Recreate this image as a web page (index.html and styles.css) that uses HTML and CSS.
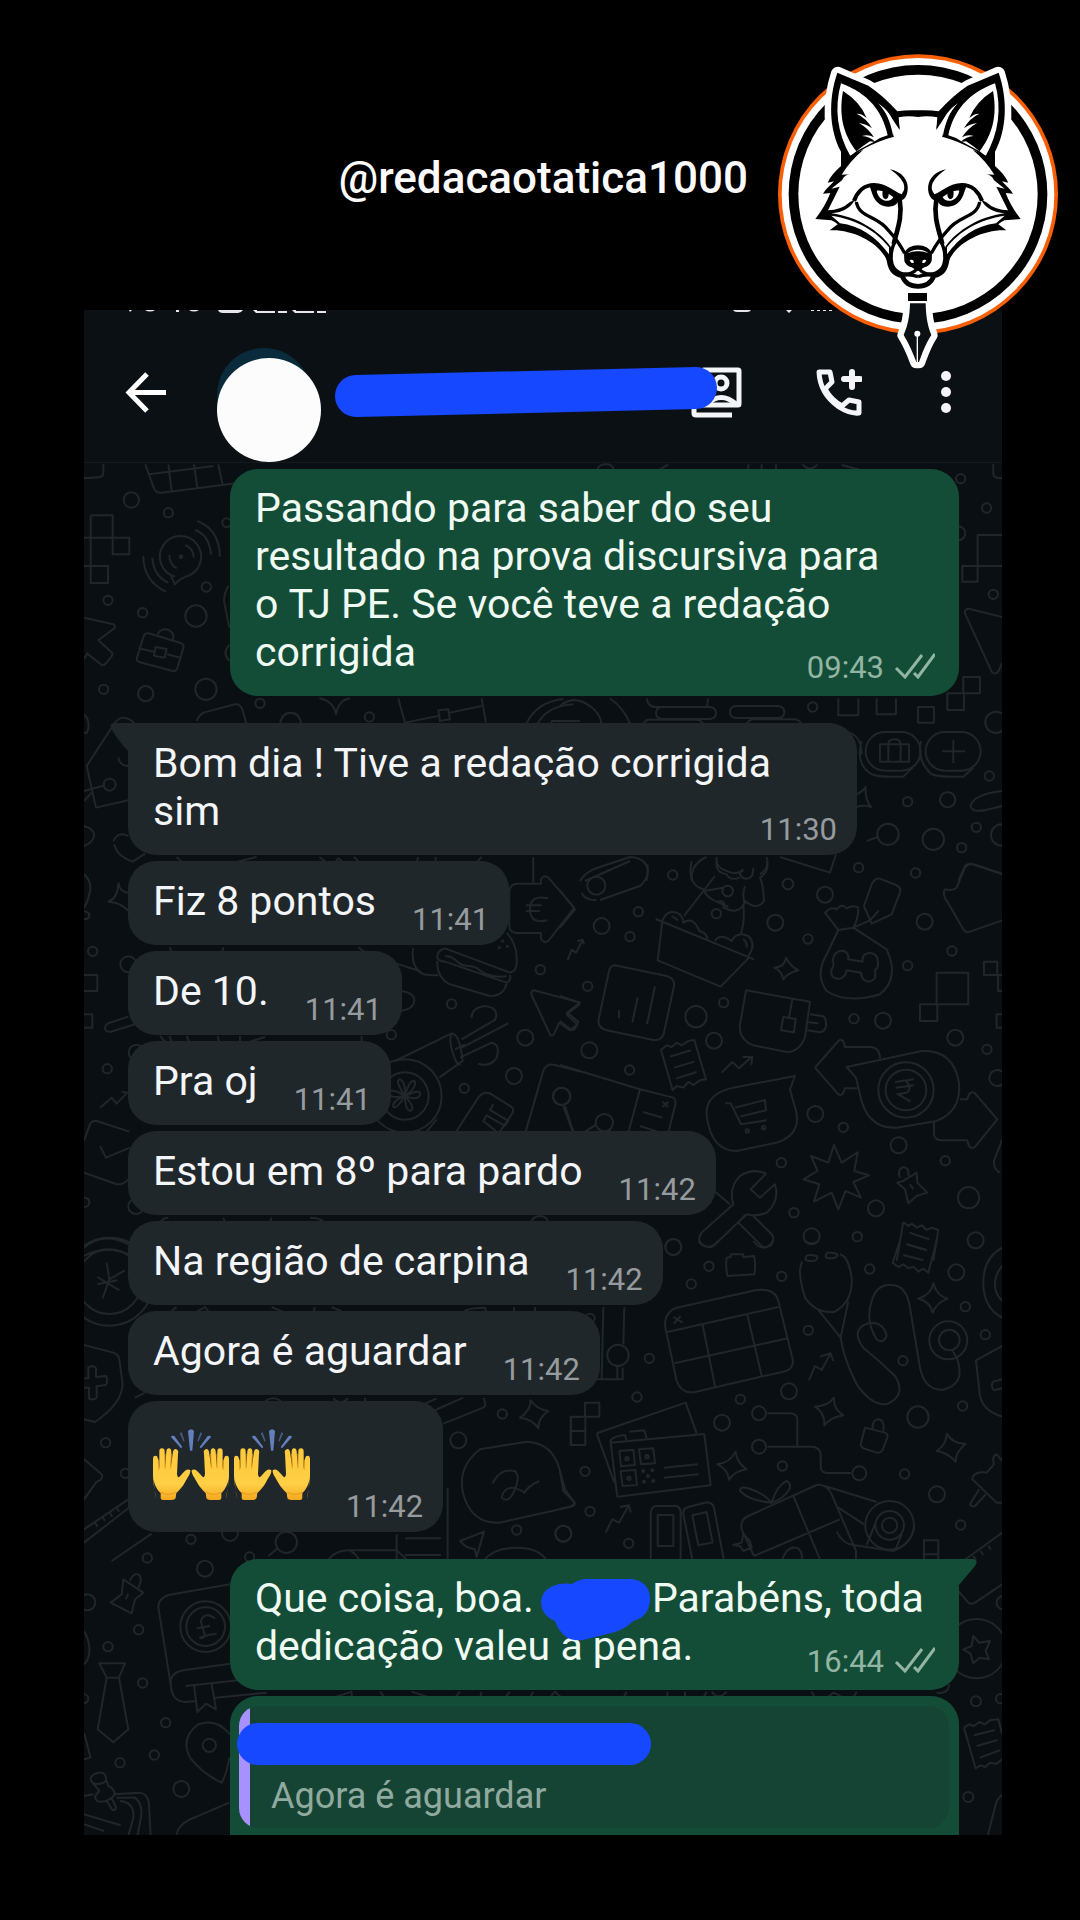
FILE: index.html
```
<!DOCTYPE html>

<html lang="pt-BR">
    <head>
        <meta charset="utf-8">
        <meta name="viewport" content="width=device-width, initial-scale=1">
        <title>@redacaotatica1000</title>
        <link rel="stylesheet" href="styles.css">
    </head>
    <body>

        <svg width="0" height="0" class="defs" aria-hidden="true">
            <defs>
                <symbol id="checks" viewBox="0 0 41 26">
                    <path d="M2 15L11 24L28 2M20 20L24 24L41 1" fill="none" stroke="currentColor" stroke-width="3"/>
                </symbol>
                <linearGradient id="skin" x1="0" y1="0" x2="0" y2="1">
                    <stop offset="0" stop-color="#ffc93c"/>
                    <stop offset="0.7" stop-color="#ffcf45"/>
                    <stop offset="1" stop-color="#f5a71f"/>
                </linearGradient>
                <g id="hand">
                    <path d="M8 210C8 190 0 165 0 140V90Q0 80 7 80T15 90L19 120V68Q19 58 27 58T35 68L37 116L40 66Q41 57 48 58T55 68L53 118L60 68Q62 58 70 61T75 74L72 135C75 150 78 145 87 135C96 124 104 118 112 124C113 135 103 146 96 160C88 176 78 184 70 192L68 206Q67 212 56 213H33Q23 213 23 206V192C12 182 2 165 0 140" fill="url(#skin)"/>
                    <path d="M17 92V122M36 74V118M55 74L53 118M24 190Q45 202 68 190" fill="none" stroke="#e79a1c" stroke-width="3"/>
                </g>
                <symbol id="praise" viewBox="0 0 228 213">
                    <use href="#hand"/>
                    <use href="#hand" transform="translate(228 0) scale(-1 1)"/>
                    <path d="M105 6Q115-4 123 6L118 65H111Z M54 24Q55 18 64 21L88 54L84 58Z M174 24Q173 18 164 21L140 54L144 58Z" fill="#6380bd"/>
                    <path d="M80 13L86 10L95 36L92 38Z M148 13L142 10L133 36L136 38Z" fill="#455985"/>
                </symbol>
            </defs>
        </svg>

        <header class="brand">
            <span class="handle">@redacaotatica1000</span>
            <svg class="logo" viewBox="0 0 960 1020" role="img" aria-label="Redação Tática">
                <circle cx="474" cy="463" r="420" fill="#f95f06"/>
                <circle cx="474" cy="463" r="409" fill="#fff"/>
                <circle cx="474" cy="463" r="388"/>
                <circle cx="474" cy="463" r="359" fill="#fff"/>
                <g id="half">
                    <path d="M233 100C204 190 208 280 243 335L245 372L400 292L418 265L412 214Q370 165 320 138Z" fill="#fff" stroke="#fff" stroke-width="40" stroke-linejoin="round"/>
                    <!-- ear -->
                    <path d="M232 98C204 180 208 270 243 335L243 378C280 340 340 305 402 290C400 262 382 215 355 190C385 215 402 245 419 270L416 232Q445 226 474 231V211Q440 209 412 214Q370 167 325 137Z"/>
                    <path d="M243 130C325 160 368 215 383 286Q360 292 342 305L289 334L271 348C232 280 222 205 243 130Z" fill="#fff"/>
                    <path d="M249 153C235 230 252 285 289 334Q308 318 330 304L346 306Q330 290 306 288Q325 282 342 292Q325 265 297 249Q318 252 336 265Q320 235 290 221Q305 220 320 234Q300 185 249 153Z"/>
                    <path d="M355 190C382 210 398 230 405 262L400 290C390 240 378 215 355 190Z" fill="#fff"/>
                    <path d="M355 190C384 208 404 235 419 268Q416 230 398 208Z"/>
                    <!-- cheek -->
                    <path d="M243 360L243 378C225 394 211 410 203 428L222 424C210 437 196 448 189 461L211 459C200 488 184 514 166 537L214 541Q225 546 233 553L209 571C280 567 365 610 384 670L398 650L392 620C355 570 290 530 214 520Q266 516 284 480L270 486Q242 511 204 511L239 440L214 446L246 421Q253 404 270 403L245 404Q268 365 310 329L275 345Z"/>
                    <path d="M214 527C290 538 352 575 387 622V643C350 592 300 557 240 550Z" fill="#fff"/>
                    <!-- eye and brow -->
                    <path d="M276 481Q296 430 342 429C382 430 400 454 425 463Q451 430 390 388C440 398 452 440 438 469Q430 484 416 480C410 508 354 510 338 465L330 442Q302 446 288 485Z"/>
                    <path d="M350 452C364 448 386 461 400 471C394 489 356 488 350 452Z" fill="#fff"/>
                    <path d="M368 450Q364 477 378 478Q390 471 384 455Z"/>
                    <path d="M289 486C298 535 352 525 386 572Q414 602 434 640" class="fox-line"/>
                    <path d="M419 478C428 530 412 568 401 612" class="fox-line thick"/>
                    <path d="M408 598C386 640 388 685 419 698C444 708 464 698 474 682" class="fox-line"/>
                    <path d="M386 650C388 690 405 704 426 707Q438 739 474 739" class="fox-line thick"/>
                    <path d="M428 706Q452 702 474 710" class="fox-line"/>
                    <!-- nose -->
                    <path d="M474 616Q444 617 432 638L433 663Q438 678 455 682L474 694Z"/>
                    <path d="M474 629Q455 628 443 640Q457 633 474 634Z M449 660Q463 656 461 669Q452 671 449 660Z" fill="#fff"/>
                </g>
                <use href="#half" transform="translate(948 0) scale(-1 1)"/>
                <!-- nib -->
                <path d="M450 790H497C498 830 502 855 514 885C496 912 486 942 477 966H469C460 942 448 912 431 885C444 855 449 830 450 790Z" fill="#0b1014" stroke="#fff" stroke-width="38" stroke-linejoin="round"/>
                <path d="M450 790H497C498 830 502 855 514 885C496 912 486 942 477 966H469C460 942 448 912 431 885C444 855 449 830 450 790Z" fill="#0b1014"/>
                <path d="M444 759H501V783H444Z"/>
                <circle cx="472" cy="881" r="9" fill="#fff"/>
                <path d="M472 884V966" stroke="#fff" stroke-width="4"/>
            </svg>
        </header>

        <main class="phone">

            <div class="topbar">
                <svg class="status" viewBox="0 0 918 4" aria-hidden="true">
                    <path d="M45 0h3l-2 2zM61 0h10q-5 3-10 0zM92 0h3v2h-3zM105 0h10q-5 3-10 0zM134 0h25q-2 3-5 3h-15q-4 0-5-3zM169 0h4v1h18v2h-19zM194 1h9v2h-9zM208 0h4v1h18v2h-19zM233 1h9v2h-9zM649 0h18q-1 2-4 2h-10q-3 0-4-2zM702 0h6l-3 3zM727 0h3v1h-3zM733 0h3v1h-3zM739 0h3v1h-3zM745 0h3v1h-3zM866 0h15v2h-15z" fill="#e7e4ea"/>
                </svg>
                <button class="icon-btn back" aria-label="Voltar">
                    <svg width="41" height="41" viewBox="0 0 41 41"><path d="M22 2L4 20.500L22 39M3 20.500H41" fill="none" stroke="#fff" stroke-width="5"/></svg>
                </button>
                <div class="avatar"></div>
                <div class="contact">
                    <svg class="cover" width="382" height="52" viewBox="0 0 382 52" aria-hidden="true">
                        <path d="M21 30L361 22" stroke="#1648ff" stroke-width="42" stroke-linecap="round"/>
                    </svg>
                </div>
                <button class="icon-btn" aria-label="Contato">
                    <svg width="51" height="52" viewBox="0 0 51 52" fill="none" stroke="#f4f5f8" stroke-width="5">
                        <rect x="12" y="4" width="36" height="35" rx="1"/>
                        <circle cx="30" cy="17" r="6"/>
                        <path d="M16 38Q30 25 45 38M3 10V47Q3 49 5 49H41"/>
                    </svg>
                </button>
                <button class="icon-btn call" aria-label="Ligar">
                    <svg width="46" height="47" viewBox="0 0 46 47" fill="none" stroke="#f4f5f8" stroke-width="5" stroke-linejoin="round">
                        <path d="M3 3H14L16 13L9 20Q15 31 26 37L33 31L43 33V44Q34 45 23 38Q4 25 3 3Z"/>
                        <path d="M36 3V18M28 10H44" stroke-width="6" stroke-linecap="round"/>
                    </svg>
                </button>
                <button class="icon-btn menu" aria-label="Mais opções">
                    <svg width="10" height="42" viewBox="0 0 10 42" fill="#f4f5f8"><circle cx="5" cy="5" r="5"/><circle cx="5" cy="21" r="5"/><circle cx="5" cy="37" r="5"/></svg>
                </button>
            </div>

            <div class="chat">

                <svg class="doodles" viewBox="84 462 918 1373" preserveAspectRatio="xMidYMin slice" aria-hidden="true">
                    <g transform="translate(80 460) scale(.3333)">
                        <path d="M70 10V35Q70 48 55 49L12 52M196 10L222 82Q228 97 245 95L480 65M208 40L400 15M265 10L275 90M342 10L352 80M415 10L428 72"/>
                        <path d="M32 163H98V230H148V280H98V230H12M32 163V315H84V366H32V315H12"/>
                        <path d="M285 347A62 62 0 1 1 318 347Q300 352 285 370Q280 355 272 346M190 285Q190 360 258 392M217 290Q220 345 265 365M345 207Q388 222 393 280M352 180Q418 205 420 287M268 282Q268 310 290 322M315 252Q340 260 341 290"/>
                        <circle cx="303" cy="287" r="4"/>
                        <path d="M12 470L100 490Q108 495 103 502L55 538L96 575Q100 582 92 590L75 610Q68 616 60 608L22 578L12 594"/>
                        <path d="M207 517L302 546Q313 550 310 560L292 622Q288 632 278 630L180 604Q167 600 171 590L190 528Q194 515 207 517ZM175 562L222 572M262 580L300 590M227 558L260 564L254 590L222 584ZM233 520Q245 498 268 508Q285 518 278 536"/>
                        <path d="M445 375Q430 400 433 425L448 500M448 552Q425 575 448 600M350 780Q355 765 370 755L465 730Q480 728 487 745L500 790M600 790Q605 755 632 755T664 790M718 712Q760 720 768 760Q775 718 810 712M955 712L975 785L1075 765M1110 755L1205 735M1205 712L1218 785M1075 748L1105 745L1110 775L1080 780Z"/>
                        <path d="M1338 790Q1370 722 1450 714M1372 790Q1400 735 1480 730M1415 790V780H1500"/>
                        <path d="M95 800L20 915L48 1040L145 1018M95 800Q110 770 130 770Q150 770 165 790M12 990L75 973M12 1020L35 995M115 890Q120 915 145 915M100 1140Q115 1110 145 1125M103 1150Q110 1185 158 1202L195 1178M290 1188L308 1205M460 1205L530 1188M718 1188L740 1205M765 1205L775 1192L790 1205M822 1188L840 1205M1010 1205L1015 1188M1067 1188V1205M1190 1205L1205 1188M1360 1188V1270M12 760Q28 775 25 800T12 812M12 1095Q45 1105 42 1125T12 1155"/>
                        <circle cx="154" cy="117" r="23"/><circle cx="265" cy="155" r="14"/><circle cx="379" cy="378" r="14"/><circle cx="348" cy="465" r="32"/><circle cx="84" cy="418" r="14"/><circle cx="188" cy="455" r="14"/><circle cx="71" cy="685" r="14"/><circle cx="197" cy="698" r="23"/><circle cx="378" cy="685" r="32"/><circle cx="540" cy="727" r="14"/><circle cx="868" cy="768" r="14"/><circle cx="440" cy="185" r="13"/><circle cx="89" cy="971" r="18"/>
                    </g>
                    <g transform="translate(560 460) scale(.3333)">
                        <path d="M112 25Q118 10 138 10T160 25M295 28L325 10M565 10V28M605 10V28M648 10V28M728 10Q750 35 772 10M845 12L905 28M1300 10V40Q1302 52 1327 52M1327 222H1253V315H1327M1207 315H1253V362H1207ZM1327 468L1225 443Q1213 445 1215 457L1295 632Q1305 643 1315 632L1327 605M1210 648H1260V697H1210ZM1162 697H1212V747H1162ZM1074 738H1122V785H1074ZM835 712V763H895V712M950 712V760H1008V712"/>
                        <path d="M0 735Q40 700 90 735Q120 755 125 790M150 712Q195 745 210 790M260 712Q265 738 285 738H440Q445 725 443 712M306 738H450Q468 740 468 756T450 774H306Q288 772 288 756T306 738M528 735H655Q673 737 673 753T655 771H528Q510 769 510 753T528 735M250 790Q255 775 275 776H410Q425 778 430 790M560 790Q565 775 585 775H705Q720 777 724 790"/>
                        <rect x="917" y="813" width="165" height="116" rx="58"/><rect x="1097" y="813" width="165" height="116" rx="58"/>
                        <path d="M905 840Q885 910 935 940Q960 950 1030 947L1058 920M1083 840Q1070 900 1115 940Q1140 950 1210 947L1240 920M870 815Q905 830 905 880M960 850H1047V902H960ZM985 902V850Q985 835 1003 835T1022 850V902M1180 837V907M1147 871H1215"/>
                        <path d="M890 1000Q910 990 917 978Q915 1015 933 1038Q910 1030 890 1038M920 1140L953 1128M1327 990Q1240 1000 1232 1035Q1235 1060 1300 1042L1327 1035M60 1260Q70 1240 100 1225L210 1188Q260 1190 263 1230L260 1260M395 1260Q390 1210 440 1188M660 1188L810 1235L828 1180M470 1188Q465 1220 500 1230Q530 1245 550 1225M620 1188Q630 1220 600 1240M1195 1260L1215 1215Q1225 1205 1240 1210L1327 1238"/>
                        <circle cx="1202" cy="53" r="14"/><circle cx="1280" cy="141" r="14"/><circle cx="1195" cy="217" r="21"/><circle cx="1300" cy="400" r="14"/><circle cx="758" cy="738" r="14"/><circle cx="1308" cy="784" r="32"/><circle cx="1288" cy="945" r="14"/><circle cx="1163" cy="1016" r="23"/><circle cx="1043" cy="1022" r="14"/><circle cx="984" cy="1120" r="32"/><circle cx="1120" cy="1135" r="32"/><circle cx="1249" cy="1099" r="14"/><circle cx="1205" cy="1160" r="14"/><circle cx="1325" cy="1122" r="32"/>
                    </g>
                    <g transform="translate(80 860) scale(.3333)">
                        <path d="M12 40Q35 60 30 90T12 140M12 150Q30 155 28 165T12 175M115 65Q120 95 145 95M115 65Q115 110 85 122Q125 125 145 150M12 342H52V390H12M12 460H37V500H12M145 467L85 487Q70 498 78 508Q85 516 100 510L165 490M60 740L95 710L110 728L142 695L125 692M12 840L30 790Q35 778 50 780L148 812M12 935L110 970Q130 972 145 955M60 855L78 890L150 860M12 1160Q70 1110 145 1150M12 1185Q75 1150 145 1180"/>
                        <path d="M1310 68H1383V55Q1390 40 1405 50L1483 140L1405 240Q1390 248 1383 232V216H1310Q1288 214 1288 195V90Q1290 70 1310 68ZM1405 112Q1350 100 1350 145T1402 178M1338 133H1385M1338 150H1380"/>
                        <path d="M1000 260Q990 320 1030 340Q1060 345 1075 342M940 305L1020 330M1095 262L1290 335Q1312 330 1310 300Q1312 250 1280 215M1095 262Q1070 270 1072 290Q1075 300 1095 302L1280 365Q1295 360 1290 342M1072 300Q1070 350 1110 370L1230 405Q1270 405 1280 368M1095 285Q1115 285 1130 300T1165 315T1200 328T1240 345T1280 345"/>
                        <path d="M1500 425L1362 388Q1352 390 1355 402L1410 520Q1417 528 1423 518L1438 485L1470 508L1492 490L1460 460L1500 430"/>
                        <path d="M945 600L1115 517Q1140 520 1148 600L1078 650M1115 517Q1105 540 1120 580Q1130 615 1142 610M1145 535L1245 477Q1260 440 1215 435Q1175 440 1175 470M1145 560L1285 487M1140 590L1235 545Q1262 550 1250 590Q1230 620 1195 608M1125 565L1155 550"/>
                        <circle cx="975" cy="705" r="110"/><circle cx="975" cy="705" r="71"/>
                        <path d="M975 705Q945 660 958 655Q978 660 975 705Q990 650 1005 662Q1010 680 975 705Q1025 680 1020 703Q1010 720 975 705Q1010 745 990 750Q975 745 975 705Q950 745 940 738Q935 720 975 705Q920 715 930 690Q945 685 975 705M1130 810L1195 710Q1210 690 1230 697L1290 735Q1305 743 1297 757L1260 812M1240 730L1230 747L1285 780L1275 795L1220 763L1210 780L1250 812M1337 812L1390 630Q1400 605 1425 612L1500 632M1455 735L1480 812M1040 812L1070 775M240 525L260 548M268 525L278 548M320 525L330 548M413 525L418 548M480 525V548M490 548L555 528M845 525V548M270 258L275 278M430 258L425 278M835 258L860 278M240 1085Q250 1070 265 1070M430 1070L435 1085M570 1085L575 1070M690 1070Q720 1070 735 1085M1352 1085Q1360 1065 1380 1065T1405 1085M960 390Q1005 395 1003 420T960 450"/>
                        <circle cx="38" cy="271" r="14"/><circle cx="145" cy="310" r="24"/><circle cx="82" cy="623" r="14"/><circle cx="1381" cy="326" r="14"/><circle cx="1115" cy="429" r="14"/><circle cx="1336" cy="530" r="24"/><circle cx="1302" cy="645" r="24"/><circle cx="1153" cy="682" r="14"/><circle cx="1445" cy="706" r="26"/><circle cx="934" cy="521" r="14"/><circle cx="14" cy="1024" r="14"/><circle cx="168" cy="1036" r="23"/><circle cx="170" cy="575" r="24"/><circle cx="1268" cy="240" r="2"/><circle cx="1258" cy="260" r="2"/><circle cx="1282" cy="256" r="2"/>
                    </g>
                    <g transform="translate(560 860) scale(.3333)">
                        <path d="M75 60L210 0M120 117L240 75Q270 50 262 10M65 95Q70 115 110 118M395 0Q380 70 430 85Q440 110 470 122Q500 115 490 140Q540 165 555 120Q590 150 612 120Q610 70 600 50Q630 30 620 0M470 0Q465 35 500 40Q510 60 540 50M580 20Q580 60 550 52Q530 35 550 28M465 45L372 165M550 130Q555 180 543 218M555 75Q545 100 555 130M432 90L490 80M470 122L505 138"/>
                        <path d="M287 174L582 295M307 182L293 298L482 377L567 290M307 180Q320 145 350 155Q370 165 370 185Q400 165 418 210Q440 215 443 235M465 240Q480 215 515 240Q530 210 565 225Q590 250 565 285M335 165L355 178M550 235Q562 245 560 260"/>
                        <path d="M165 313L320 345Q345 352 342 375L312 515Q305 540 280 537L140 508Q112 500 116 475L147 330Q152 313 165 313ZM177 447V472M233 410L217 484M285 376L261 490"/>
                        <path d="M23 298L35 266L48 275L68 238M52 240L68 236L72 250M485 635L517 603L537 622L575 588M548 588H577L574 612M0 88L45 145L0 200M0 405L60 425L22 455L55 482Q45 510 35 508L0 480"/>
                        <path d="M558 388L750 422L735 530Q715 575 680 573L580 553Q535 535 540 490ZM697 415L687 470M670 468L707 474L702 514L663 508ZM750 460L790 466Q800 475 798 495Q795 512 780 514L742 508M745 484L775 487"/>
                        <path d="M303 567L320 553L335 558L350 545L365 553L385 540L403 537L438 655L420 658L400 672L385 663L370 680L350 675L338 687ZM330 587L393 568M342 620L403 602M348 653L410 633"/>
                        <path d="M705 645L520 680Q430 700 441 770Q455 870 530 870L650 845Q725 820 708 750L690 685ZM495 727H512L543 790L620 778M525 740L615 717L618 748L540 767"/>
                        <circle cx="562" cy="810" r="5"/><circle cx="611" cy="800" r="5"/>
                        <path d="M678 290Q690 315 715 328Q685 335 670 355Q665 330 643 320Q675 318 678 290Z"/>
                        <path d="M835 207L795 155Q815 135 830 145Q845 125 860 142Q880 130 895 140Q895 175 880 200L980 265Q1020 350 960 400Q860 430 800 390Q770 350 790 300Q820 240 835 207L880 200L930 178M912 135L935 70Q945 50 960 53L1008 72Q1025 80 1020 95L995 160L935 188ZM930 178L957 148"/>
                        <path d="M865 295L908 302C900 270 955 265 953 300C960 330 940 320 945 335C955 365 905 375 903 335L860 328C855 365 805 360 815 325C825 310 820 310 818 300C820 260 870 260 865 295Z"/>
                        <path d="M1327 40L1240 10Q1225 5 1215 20L1190 80Q1180 90 1155 85Q1148 95 1155 110L1210 205Q1217 217 1230 212L1327 178M1130 335H1225V430H1130ZM1080 430H1132V480H1080ZM1272 302H1312V342H1272ZM1327 342H1314V390H1327M1327 460H1310V500H1327"/>
                        <path d="M765 620L835 540Q850 528 855 558H930Q960 560 960 592M765 620L835 700Q848 708 855 682H892M860 618L1085 570Q1180 565 1197 665Q1205 750 1130 780L1010 800Q920 805 900 700L888 650ZM1122 780V820Q1125 838 1145 838H1222Q1228 870 1245 858L1312 775L1245 697Q1230 685 1222 715H1200M1005 663L1062 655M1007 680L1062 673M1010 700L1040 695Q1060 680 1035 658M1015 700L1052 722"/>
                        <circle cx="1038" cy="687" r="83"/><circle cx="1038" cy="687" r="61"/>
                        <path d="M822 852L845 905L893 874L883 930L927 943L880 963L903 1010L857 990L835 1045L815 995L762 1022L778 970L730 955L773 930L753 885L805 905ZM1012 965L1030 960L1070 935L1072 965L1102 995L1070 1005L1045 1027L1035 985ZM1020 950Q1010 925 1030 918Q1050 920 1045 945M1050 970L1060 985"/>
                        <path d="M0 612L240 685L340 710Q350 720 345 735L325 815M240 685L205 815M250 753L307 770M240 795L292 812M308 722L325 738M325 722L308 738M10 735L38 812M75 812L110 790M150 812V805"/>
                        <path d="M520 1030Q505 980 540 945Q580 920 618 938L572 985L600 1010L645 970Q660 1020 620 1055Q590 1068 560 1060L460 1155Q445 1165 425 1150Q410 1135 425 1115ZM555 1062L535 1085L605 1155Q620 1165 635 1150Q645 1130 635 1120L580 1065M445 975L510 1030M445 938H457V975H445M1030 1083L1045 1095L1055 1088L1070 1100L1085 1093L1100 1107L1115 1100L1135 1107L1120 1200M1030 1083L1010 1200M1048 1115L1108 1135M1040 1150L1100 1168M1327 835L1302 900Q1300 925 1320 935"/>
                        <circle cx="109" cy="74" r="27"/><circle cx="338" cy="42" r="14"/><circle cx="235" cy="152" r="14"/><circle cx="125" cy="195" r="24"/><circle cx="210" cy="227" r="14"/><circle cx="83" cy="376" r="14"/><circle cx="408" cy="467" r="32"/><circle cx="491" cy="425" r="14"/><circle cx="462" cy="539" r="24"/><circle cx="88" cy="568" r="24"/><circle cx="209" cy="627" r="14"/><circle cx="133" cy="785" r="26"/><circle cx="5" cy="706" r="26"/><circle cx="503" cy="90" r="16"/><circle cx="469" cy="158" r="14"/><circle cx="684" cy="69" r="16"/><circle cx="795" cy="101" r="24"/><circle cx="646" cy="185" r="24"/><circle cx="744" cy="234" r="14"/><circle cx="896" cy="20" r="14"/><circle cx="1067" cy="36" r="14"/><circle cx="1094" cy="182" r="24"/><circle cx="1176" cy="270" r="14"/><circle cx="1043" cy="314" r="14"/><circle cx="882" cy="473" r="14"/><circle cx="969" cy="479" r="24"/><circle cx="1186" cy="530" r="24"/><circle cx="1281" cy="565" r="14"/><circle cx="1312" cy="651" r="24"/><circle cx="766" cy="759" r="24"/><circle cx="850" cy="799" r="14"/><circle cx="1016" cy="853" r="24"/><circle cx="1156" cy="899" r="14"/><circle cx="664" cy="905" r="14"/><circle cx="948" cy="1042" r="24"/><circle cx="702" cy="1055" r="14"/><circle cx="755" cy="1126" r="24"/><circle cx="892" cy="1127" r="14"/><circle cx="1226" cy="1010" r="32"/><circle cx="1247" cy="1138" r="24"/><circle cx="340" cy="1158" r="24"/>
                    </g>
                    <g transform="translate(80 1240) scale(.3333)">
                        <circle cx="88" cy="122" r="132"/><circle cx="88" cy="122" r="97"/>
                        <path d="M80 65L88 115L68 172M88 115L135 88M52 108L118 148M52 130L112 118M12 312L100 335Q115 340 118 355L128 430Q125 490 45 543L12 535M12 412H25V380Q40 370 48 382V408L78 405Q85 420 78 432L50 436V470Q38 480 27 472V440H12M165 470L195 455M12 655L65 700Q70 710 60 718L50 722L12 775M12 865L145 775M12 905L160 790M95 960L215 878M45 845L53 858M68 828L75 840M90 815L97 828M110 800L117 812"/>
                        <path d="M265 218L290 198M340 218L375 198L390 218M575 198L620 218M698 218L705 198M755 198L800 218M1145 218Q1155 200 1215 200L1220 218M1302 198V218M1365 198V218M550 490Q560 472 580 472T608 490M760 472Q780 495 805 472M855 470V490M1030 490L1070 472M1060 510L1150 470M1090 548L1210 500Q1222 495 1210 470M1103 740V960M950 880V960M975 892H1083M975 942H1083M740 960Q770 925 810 928H950L985 960M810 928Q830 940 840 960"/>
                        <path d="M1352 478Q1370 505 1405 510Q1375 530 1375 562Q1360 535 1320 530Q1352 510 1352 478ZM1500 528H1472V612H1500M1472 570H1500M1200 625L1340 602Q1420 605 1440 690L1450 750L1485 785Q1485 795 1470 798L1260 845Q1175 850 1150 760Q1130 680 1200 625ZM1238 727Q1260 680 1305 690Q1325 710 1295 765Q1280 785 1265 770Q1270 740 1300 740Q1320 745 1333 755Q1345 735 1378 720M1212 872L1140 900L1160 918L1185 925L1190 948ZM1210 960Q1240 920 1310 920T1400 960M565 945L595 920"/>
                        <circle cx="77" cy="605" r="14"/><circle cx="136" cy="697" r="14"/><circle cx="1267" cy="519" r="14"/><circle cx="1135" cy="598" r="24"/><circle cx="1310" cy="867" r="14"/><circle cx="1450" cy="878" r="24"/><circle cx="333" cy="895" r="14"/><circle cx="450" cy="876" r="24"/><circle cx="619" cy="904" r="32"/><circle cx="202" cy="951" r="14"/><circle cx="509" cy="948" r="14"/>
                    </g>
                    <g transform="translate(560 1240) scale(.3333)">
                        <path d="M415 0Q445 35 475 0M580 0Q610 40 640 0M735 0Q755 15 775 0M500 50L512 48V40H550V48L582 45Q588 70 583 100L503 105Q496 80 500 50ZM130 198L125 415M193 198L190 310M95 415H188V380M172 378V415M75 485H118V527H75ZM33 527H76V612H33ZM33 570H76"/>
                        <path d="M350 200L590 147Q645 140 655 180L697 350Q705 385 670 392L405 453Q365 460 350 420L316 260Q310 215 350 200ZM322 273L655 198M343 367L684 292M428 252L466 440M562 222L605 404M340 228L368 245M362 225L342 248"/>
                        <path d="M727 62Q710 90 735 170Q770 220 825 212Q880 180 875 110Q865 45 840 40M738 52Q735 40 755 42T772 50Q770 62 750 60T738 52ZM798 45Q795 32 815 35T832 42Q830 52 812 52T798 45ZM775 207L842 290L865 180M842 290Q850 350 890 430Q940 500 985 488Q1040 460 1005 405Q960 360 910 320Q870 265 925 247Q970 240 980 285Q970 310 950 295Q915 240 935 180Q950 130 990 132Q1040 130 1050 200L1080 380Q1095 450 1150 446Q1220 430 1190 350L1175 325"/>
                        <circle cx="1165" cy="298" r="57"/><circle cx="1168" cy="297" r="31"/>
                        <path d="M1120 127Q1130 165 1163 173Q1130 185 1118 215Q1110 180 1075 173Q1115 160 1120 127ZM822 470Q820 505 850 523Q810 530 793 553Q795 515 765 497Q805 495 822 470ZM527 632Q530 665 560 685Q525 690 507 716Q505 685 472 670Q510 665 527 632ZM1160 578Q1180 610 1217 608Q1185 635 1187 663Q1165 635 1130 630Q1160 610 1160 578ZM747 418L765 375L785 387L810 340M780 347L812 337L820 360M137 875L157 835L177 845L205 795M180 798L207 793L212 815"/>
                        <path d="M1020 0L998 65L1015 78L1030 70L1045 82L1060 77L1075 92L1090 83L1105 95L1130 0M1040 10L1100 27M1030 42L1090 58M1327 20Q1270 50 1270 125T1327 230M1327 75Q1305 100 1305 130T1327 180M1327 315L1248 358L1260 465Q1270 510 1327 527M1327 415L1300 422Q1290 435 1302 448L1327 442"/>
                        <path d="M110 577L377 485L410 577M110 577L163 725M152 605L433 579L452 733L172 767ZM178 630L220 626L225 672L183 676ZM237 625L280 622L285 667L243 670ZM182 690L226 687L231 732L188 735ZM150 603Q155 585 195 582L200 600M208 572L253 568L260 592M312 680L413 670M312 710L415 700"/>
                        <circle cx="201" cy="653" r="5"/><circle cx="261" cy="647" r="5"/><circle cx="207" cy="712" r="5"/><circle cx="250" cy="690" r="3"/><circle cx="277" cy="688" r="3"/><circle cx="264" cy="705" r="3"/><circle cx="252" cy="722" r="3"/><circle cx="280" cy="720" r="3"/>
                        <path d="M622 517H690Q712 518 712 535V615M622 617H755Q780 618 782 640V675Q783 695 800 696H873M915 560L975 575Q985 580 982 590L968 627Q960 638 950 635L910 622Q900 615 903 607ZM938 565Q935 535 958 535Q975 540 970 570"/>
                        <path d="M272 960V815Q275 795 290 795H350Q362 800 362 815V960M293 822H340V915H293ZM398 960L370 820Q368 803 385 798L440 784Q458 785 462 800L492 960M397 823L440 813L458 905L415 913Z"/>
                        <path d="M582 945L545 865Q540 835 565 825L770 732Q800 728 815 760L888 930V960M582 945L840 835M700 765L782 960M635 785Q570 780 540 750Q540 735 565 742Q610 755 635 785Q650 735 680 720Q695 728 688 745Q670 775 635 785M665 960Q680 915 710 920Q730 930 725 960M520 912L545 905L550 880L570 900L575 920L550 930L540 915ZM795 735L950 783M835 800L912 850M830 872Q850 910 880 912L1000 930M920 912L945 850M1025 880L1005 930M1000 930Q1055 910 1063 855"/>
                        <circle cx="989" cy="853" r="73"/><circle cx="989" cy="853" r="43"/><circle cx="989" cy="853" r="23"/>
                        <path d="M1327 660L1310 640Q1295 645 1302 670L1280 695Q1240 690 1237 715L1310 785L1327 785M1258 745L1230 790Q1235 800 1245 795L1278 760M1092 960V898H1135V960M1092 940H1135M1210 960L1327 875M1240 945L1248 957M1262 930L1270 942M1285 915L1293 925M0 690L15 745L43 785Q40 798 0 803"/>
                        <circle cx="340" cy="18" r="24"/><circle cx="447" cy="76" r="14"/><circle cx="394" cy="129" r="14"/><circle cx="665" cy="106" r="14"/><circle cx="929" cy="84" r="14"/><circle cx="1189" cy="94" r="24"/><circle cx="1216" cy="197" r="14"/><circle cx="1276" cy="281" r="14"/><circle cx="90" cy="232" r="14"/><circle cx="174" cy="343" r="32"/><circle cx="268" cy="352" r="14"/><circle cx="231" cy="468" r="14"/><circle cx="745" cy="268" r="14"/><circle cx="1029" cy="359" r="14"/><circle cx="687" cy="451" r="24"/><circle cx="541" cy="475" r="14"/><circle cx="486" cy="545" r="24"/><circle cx="597" cy="517" r="21"/><circle cx="597" cy="617" r="21"/><circle cx="898" cy="697" r="21"/><circle cx="1208" cy="495" r="14"/><circle cx="1074" cy="528" r="32"/><circle cx="667" cy="675" r="14"/><circle cx="1034" cy="699" r="14"/><circle cx="1131" cy="760" r="24"/><circle cx="1202" cy="852" r="14"/><circle cx="75" cy="691" r="14"/><circle cx="90" cy="811" r="14"/><circle cx="206" cy="907" r="14"/><circle cx="10" cy="878" r="24"/>
                    </g>
                    <g transform="translate(80 1540) scale(.3333)">
                        <path d="M130 115L190 155L165 175L155 217L92 185L125 160ZM150 120Q160 95 175 100Q190 110 175 140M145 158L137 175"/>
                        <path d="M450 130L265 162Q230 175 236 205L272 430Q275 485 320 483L345 480M405 470L560 455M272 430Q270 395 310 388L450 368M317 435L475 418M342 432L352 513L378 488L408 505L395 428M405 232Q375 210 362 240L375 285Q365 295 360 290Q385 280 410 278M350 262L390 255"/>
                        <circle cx="377" cy="257" r="76"/><circle cx="377" cy="257" r="58"/>
                        <path d="M58 367H135L117 410H80ZM80 410L53 565L100 604L145 565L117 410M12 270Q30 300 28 330T12 370M12 575L32 650L12 655M450 580Q410 530 355 550Q300 590 330 650Q370 700 425 725Q440 700 448 650M448 785L330 835Q290 855 290 885M760 470L815 452V470M900 452L915 470M995 452L1050 470M1125 470L1140 452M1200 470L1205 452M1275 470L1290 452M1350 470L1360 452M1410 470L1425 452L1445 470"/>
                        <path d="M35 722Q25 705 50 697T78 710Q82 725 60 728T35 722M40 728L58 750Q35 770 55 782Q85 785 105 760Q100 740 85 735L78 715M80 780L98 808Q108 808 108 798L95 772M12 765L40 760M100 760L180 755Q205 760 207 790L212 885M110 770L165 770Q190 790 183 830L172 885M120 780Q165 785 160 830L145 885M12 820L122 853M12 850L72 870"/>
                        <circle cx="375" cy="83" r="24"/><circle cx="176" cy="266" r="14"/><circle cx="84" cy="317" r="14"/><circle cx="188" cy="426" r="14"/><circle cx="257" cy="545" r="14"/><circle cx="388" cy="613" r="20"/><circle cx="223" cy="642" r="14"/><circle cx="120" cy="665" r="14"/><circle cx="304" cy="744" r="24"/><circle cx="22" cy="184" r="24"/><circle cx="12" cy="473" r="13"/>
                    </g>
                    <g transform="translate(560 1540) scale(.3333)">
                        <circle cx="1250" cy="323" r="89"/>
                        <path d="M1240 285L1257 305L1290 300L1277 330L1287 355L1260 350L1240 367L1232 338L1210 325L1235 315ZM1195 150L1225 185Q1235 192 1245 185L1327 130M1212 560L1228 550L1242 555L1258 543L1275 550L1290 538L1315 535L1327 580M1212 560L1247 682L1262 673L1275 678L1290 665L1310 668L1327 655M1242 583L1305 567M1250 615L1313 597M1260 650L1320 628M1283 885L1310 780L1327 760M190 470L200 452M322 452V470M375 452V470M430 470L440 452M455 452Q475 480 500 452M755 452L765 470M800 470L822 455L850 470M880 470L890 452M1130 455Q1165 460 1168 430"/>
                        <circle cx="1248" cy="481" r="15"/><circle cx="1322" cy="473" r="14"/><circle cx="1225" cy="768" r="15"/><circle cx="1330" cy="185" r="20"/>
                    </g>
                </svg>

                <div class="bubble sent wide">
                    <p>Passando para saber do seu resultado na prova discursiva para o&nbsp;TJ PE. Se você teve a redação corrigida</p>
                    <span class="time">09:43 <svg class="checks"><use href="#checks"/></svg></span>
                </div>

                <div class="bubble received wide first">
                    <svg class="tail" viewBox="0 0 46 30" aria-hidden="true"><path d="M46 0H4Q-2 1 2 7Q10 20 18 28L46 30Z" fill="#20272a"/></svg>
                    <p>Bom dia ! Tive a redação corrigida sim</p>
                    <span class="time">11:30</span>
                </div>
                <div class="bubble received"><p>Fiz 8 pontos</p><span class="time">11:41</span></div>
                <div class="bubble received"><p>De 10.</p><span class="time">11:41</span></div>
                <div class="bubble received"><p>Pra oj</p><span class="time">11:41</span></div>
                <div class="bubble received"><p>Estou em 8º para pardo</p><span class="time">11:42</span></div>
                <div class="bubble received"><p>Na região de carpina</p><span class="time">11:42</span></div>
                <div class="bubble received"><p>Agora é aguardar</p><span class="time">11:42</span></div>
                <div class="bubble received emoji">
                    <div class="hands">
                        <svg role="img" aria-label="mãos levantadas"><use href="#praise"/></svg>
                        <svg role="img" aria-label="mãos levantadas"><use href="#praise"/></svg>
                    </div>
                    <span class="time">11:42</span>
                </div>

                <div class="bubble sent wide first">
                    <svg class="tail" viewBox="0 0 46 30" aria-hidden="true"><path d="M0 0H42Q48 1 44 7L28 26L0 30Z" fill="#144d37"/></svg>
                    <p>Que coisa, boa. <span class="hidden-name"><svg class="scribble" width="110" height="62" viewBox="0 0 110 62" aria-hidden="true"><path d="M18 5Q26 4 31 5Q38 0 46 0H90Q109 2 109 21Q108 38 92 42Q86 49 74 53L42 61Q22 64 14 42Q0 36 0 23Q1 9 18 5Z" fill="#1648ff"/></svg></span>Parabéns, toda dedicação valeu a pena.</p>
                    <span class="time">16:44 <svg class="checks"><use href="#checks"/></svg></span>
                </div>

                <div class="bubble sent reply">
                    <blockquote class="quote">
                        <div class="quote-name"></div>
                        <p>Agora é aguardar</p>
                    </blockquote>
                </div>

            </div>
        </main>

    </body>
</html>
```

FILE: styles.css
```
*{
    box-sizing: border-box;
}

body{
    margin: 0;
    padding-bottom: 85px;
    background: #000;
    font-family: Roboto, "Liberation Sans", sans-serif;
}

p{
    margin: 0;
}

.defs{
    position: absolute;
}

/* top of the page */
.brand{
    display: flex;
    justify-content: flex-end;
    align-items: flex-start;
    gap: 12px;
    padding-top: 40px;
}

.handle{
    margin-top: 111px;
    color: #fcfafa;
    font-size: 44px;
    font-weight: 500;
    line-height: 54px;
}

.logo{
    position: relative;
    z-index: 2;
    width: 320px;
    height: 340px;
    margin-bottom: -70px;
}

.fox-line{
    fill: none;
    stroke: #000;
    stroke-width: 10px;
}

.thick{
    stroke-width: 14px;
}

/* phone */
.phone{
    margin: 0 78px 0 84px;
    background: #0a0f13;
    overflow: hidden;
}

.topbar{
    position: relative;
    display: flex;
    align-items: center;
    height: 152px;
    padding: 12px 51px 0 41px;
    background: #0b1014;
}

.status{
    position: absolute;
    top: 0;
    left: 0;
    width: 100%;
}

.icon-btn{
    display: block;
    padding: 0;
    border: 0;
    background: none;
}

.icon-btn svg{
    display: block;
}

.avatar{
    position: relative;
    width: 94px;
    height: 94px;
    margin-top: 6px;
    margin-left: 51px;
    border-radius: 50%;
    background: #0a2b3b;
}

.avatar::after{
    content: "";
    position: absolute;
    top: 10px;
    left: 0;
    width: 104px;
    height: 104px;
    border-radius: 50%;
    background: #fcfcfc;
}

.contact{
    position: relative;
    flex: 1;
    height: 52px;
}

.cover{
    position: absolute;
    top: 0;
    left: 24px;
    z-index: 1;
}

.call{
    margin-left: 74px;
}

.menu{
    margin-left: 79px;
}

/* messages */
.chat{
    position: relative;
    display: flex;
    flex-direction: column;
    align-items: flex-start;
    gap: 6px;
    padding: 6px 43px 0 44px;
    border-top: 1px solid #14191d;
}

.doodles{
    position: absolute;
    top: 0;
    left: 0;
    width: 100%;
    height: 100%;
    fill: none;
    stroke: #21262a;
    stroke-width: 6px;
    stroke-linejoin: round;
}

.bubble{
    position: relative;
    display: grid;
    grid-template-columns: auto auto;
    column-gap: 36px;
    padding: 16px 20px 20px 25px;
    border-radius: 28px;
    color: #f3f5f9;
    font-size: 41px;
    line-height: 48px;
}

.received{
    background: #20272a;
}

.sent{
    align-self: flex-end;
    padding: 15px 24px 20px 25px;
    background: #144d37;
    color: #effaf3;
}

.wide{
    width: 100%;
    max-width: 729px;
    grid-template-columns: 1fr;
}

.wide p, .wide .time{
    grid-area: 1 / 1;
}

.first{
    margin-top: 21px;
}

.time{
    display: flex;
    gap: 10px;
    align-self: end;
    justify-self: end;
    margin-bottom: -13px;
    color: #969b9e;
    font-size: 31px;
    line-height: 36px;
}

.sent .time{
    margin-bottom: -10px;
    color: #92b5a4;
}

.checks{
    width: 41px;
    height: 26px;
    margin-top: 3px;
}

.tail{
    position: absolute;
    top: 0;
    width: 46px;
    height: 30px;
}

.received .tail{
    left: -18px;
}

.sent .tail{
    right: -18px;
}

.emoji{
    padding-top: 28px;
}

.hands{
    display: flex;
    gap: 5px;
    height: 83px;
}

.hands svg{
    width: 76px;
    height: 71px;
}

.hidden-name{
    position: relative;
    display: inline-block;
    width: 108px;
    height: 40px;
    vertical-align: top;
}

.scribble{
    position: absolute;
    top: 5px;
    left: -3px;
}

/* quoted reply */
.reply{
    display: block;
    width: 100%;
    max-width: 729px;
    padding: 10px 10px 7px 9px;
    border-radius: 28px 28px 0 0;
}

.quote{
    margin: 0;
    padding: 17px 32px 11px;
    border-radius: 20px;
    background: linear-gradient(to right, #a791ff 11px, #154434 11px);
    color: #90aa9f;
    font-size: 36px;
    line-height: 42px;
}

.quote-name{
    width: 414px;
    height: 42px;
    margin-left: -34px;
    margin-bottom: 10px;
    border-radius: 21px;
    background: #1648ff;
}
```
